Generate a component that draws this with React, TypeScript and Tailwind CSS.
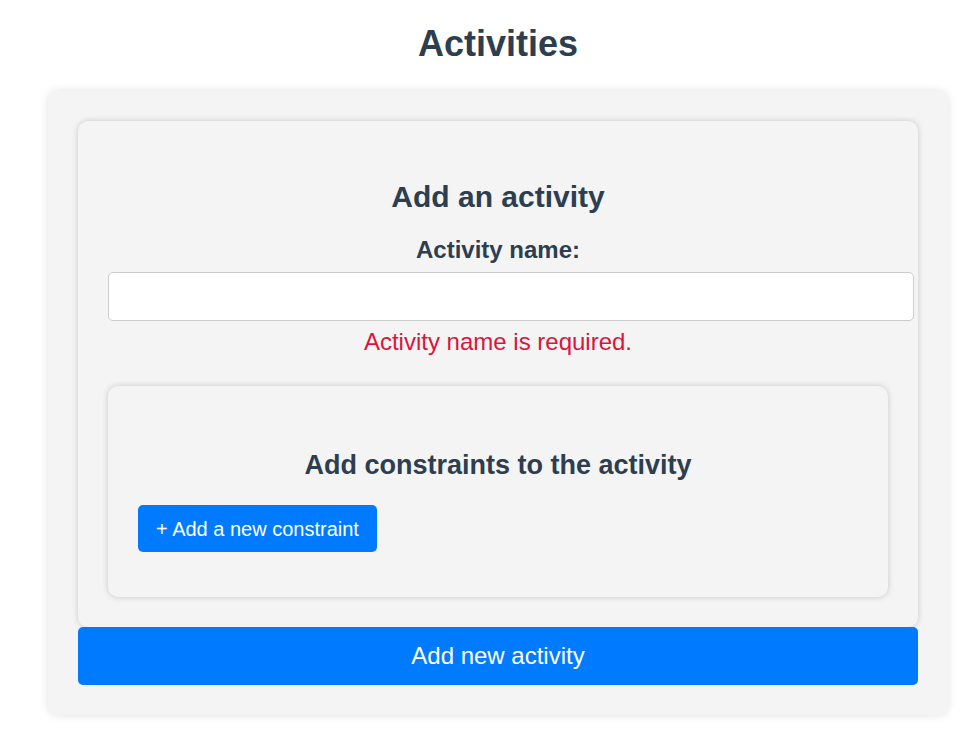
export default function App() {
  return (
    <div className="min-h-screen bg-white font-['Liberation_Sans',Arial,sans-serif] text-[#2c3e50]">
      <div className="ml-[48px] w-[900px] pt-[23px]">
        <h1 className="text-center text-[36px] font-bold leading-[41px]">Activities</h1>

        <div className="mt-[27px] rounded-[10px] bg-[#f4f4f4] p-[30px] shadow-[0_0_10px_rgba(0,0,0,0.12)]">
          {/* Activity form card */}
          <div className="rounded-[10px] bg-[#f4f4f4] p-[30px] shadow-[0_0_6px_rgba(0,0,0,0.18)]">
            <h2 className="mt-[29px] text-center text-[30px] font-bold leading-[34px]">Add an activity</h2>
            <label className="mt-[22px] block text-center text-[24px] font-bold leading-[28px]">Activity name:</label>
            <input
              type="text"
              className="mt-[8px] box-content block h-[47px] w-full rounded-[5px] border border-[#cccccc] bg-white px-[12px] py-0 outline-none"
            />
            <p className="mt-[7px] text-center text-[24px] leading-[28px] text-[#dc143c]">Activity name is required.</p>

            {/* Constraints card */}
            <div className="mt-[30px] rounded-[10px] bg-[#f4f4f4] px-[30px] pt-[30px] pb-[45px] shadow-[0_0_6px_rgba(0,0,0,0.18)]">
              <h3 className="mt-[34px] text-center text-[27px] font-bold leading-[31px]">Add constraints to the activity</h3>
              <button className="mt-[24px] h-[47px] rounded-[5px] bg-[#007bff] px-[18px] text-[20px] text-white">
                + Add a new constraint
              </button>
            </div>
          </div>

          <button className="block h-[58px] w-full rounded-[5px] bg-[#007bff] text-[24px] text-white">
            Add new activity
          </button>
        </div>
      </div>
    </div>
  );
}
